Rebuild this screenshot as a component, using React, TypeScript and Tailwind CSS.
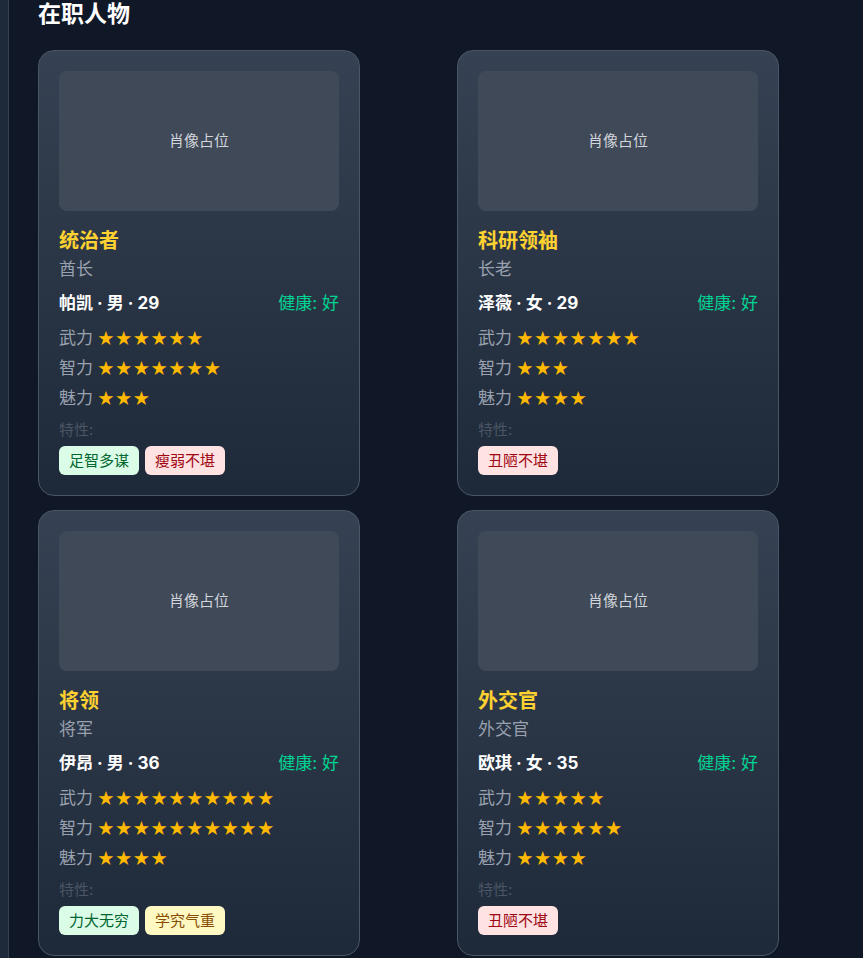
import React from 'react';

type Trait = { name: string; tone: 'green' | 'red' | 'yellow' };

type Person = {
  title: string;
  rank: string;
  name: string;
  gender: string;
  age: number;
  health: string;
  force: number;
  wit: number;
  charm: number;
  traits: Trait[];
};

const people: Person[] = [
  {
    title: '统治者',
    rank: '酋长',
    name: '帕凯',
    gender: '男',
    age: 29,
    health: '好',
    force: 6,
    wit: 7,
    charm: 3,
    traits: [
      { name: '足智多谋', tone: 'green' },
      { name: '瘦弱不堪', tone: 'red' },
    ],
  },
  {
    title: '科研领袖',
    rank: '长老',
    name: '泽薇',
    gender: '女',
    age: 29,
    health: '好',
    force: 7,
    wit: 3,
    charm: 4,
    traits: [{ name: '丑陋不堪', tone: 'red' }],
  },
  {
    title: '将领',
    rank: '将军',
    name: '伊昂',
    gender: '男',
    age: 36,
    health: '好',
    force: 10,
    wit: 10,
    charm: 4,
    traits: [
      { name: '力大无穷', tone: 'green' },
      { name: '学究气重', tone: 'yellow' },
    ],
  },
  {
    title: '外交官',
    rank: '外交官',
    name: '欧琪',
    gender: '女',
    age: 35,
    health: '好',
    force: 5,
    wit: 6,
    charm: 4,
    traits: [{ name: '丑陋不堪', tone: 'red' }],
  },
];

const toneClass = {
  green: 'bg-green-100 text-green-800',
  red: 'bg-red-100 text-red-800',
  yellow: 'bg-yellow-100 text-yellow-800',
};

function StatRow({ label, value }: { label: string; value: number }) {
  return (
    <div className="flex h-[30px] items-center">
      <span className="text-[17px] text-gray-400">{label}</span>
      <span className="ml-1 text-[17px] leading-none text-amber-400">{'★'.repeat(value)}</span>
    </div>
  );
}

function PersonCard({ p }: { p: Person }) {
  return (
    <div className="w-[322px] rounded-2xl border border-gray-600 bg-gradient-to-b from-gray-700 to-gray-800 p-5">
      <div className="flex h-[140px] items-center justify-center rounded-lg bg-[#404957] text-[15px] text-gray-300">
        肖像占位
      </div>
      <div className="mt-4 text-xl font-bold leading-7 text-amber-300">{p.title}</div>
      <div className="mt-0.5 text-[17px] leading-6 text-gray-400">{p.rank}</div>
      <div className="mt-2.5 flex items-center justify-between text-[17px] leading-6">
        <span className="font-bold text-white">
          {p.name} · {p.gender} · {p.age}
        </span>
        <span className="text-emerald-400">健康: {p.health}</span>
      </div>
      <div className="mt-[9px]">
        <StatRow label="武力" value={p.force} />
        <StatRow label="智力" value={p.wit} />
        <StatRow label="魅力" value={p.charm} />
      </div>
      <div className="mt-[6px] text-[15px] leading-5 text-gray-600">特性:</div>
      <div className="mt-1.5 flex gap-1.5">
        {p.traits.map((t) => (
          <span key={t.name} className={`rounded-md px-2.5 py-1 text-[15px] leading-[21px] ${toneClass[t.tone]}`}>
            {t.name}
          </span>
        ))}
      </div>
    </div>
  );
}

export default function App() {
  return (
    <div
      className="flex min-h-[958px] bg-gray-900"
      style={{ fontFamily: 'Inter, "Noto Sans CJK SC", sans-serif' }}
    >
      <div className="w-[9px] shrink-0 border-r border-gray-700 bg-gray-800" />
      <main className="flex-1 pl-[29px]">
        <h2 className="text-[23px] font-bold leading-7 text-white">在职人物</h2>
        <div className="mt-[22px] grid grid-cols-[405px_405px] gap-x-[14px] gap-y-[14px]">
          {people.map((p) => (
            <PersonCard key={p.title} p={p} />
          ))}
        </div>
      </main>
    </div>
  );
}
